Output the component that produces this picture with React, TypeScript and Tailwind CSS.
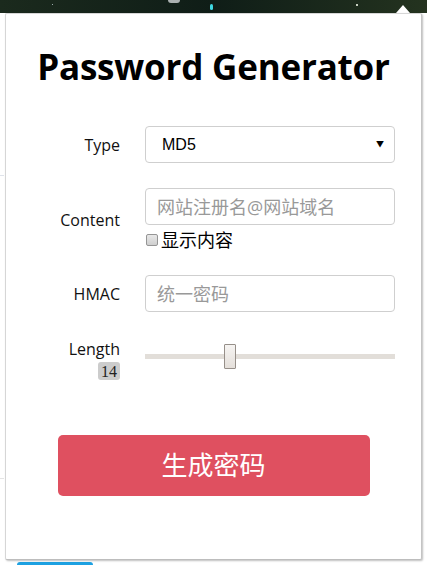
import React from "react";

// Extension popup "Password Generator" over its host page
const sans = "font-['Segoe_UI','Open_Sans','Noto_Sans_CJK_SC',sans-serif]";

export default function App() {
  const length = 14;
  const min = 4;
  const max = 34;
  const pct = (length - min) / (max - min);

  return (
    <div className={`relative w-[427px] h-[565px] overflow-hidden bg-white ${sans}`}>
      {/* host page: dark starry header strip */}
      <div className="h-[13px] bg-gradient-to-r from-[#1b2a1d] via-[#0f1d17] to-[#24331f] relative">
        <span className="absolute left-[168px] top-0 w-[12px] h-[3px] bg-[#aab0b0] rounded-b-sm" />
        <span className="absolute left-[210px] top-[4px] w-[3px] h-[6px] bg-[#3fd7e0] rounded-full" />
        <span className="absolute left-[356px] top-[4px] w-[2px] h-[2px] bg-[#c8d0c0]" />
        <span className="absolute left-[52px] top-[4px] w-[1px] h-[1px] bg-[#9aa]" />
      </div>
      {/* host page bottom bits */}
      <div className="absolute left-[17px] bottom-0 w-[76px] h-[3px] bg-[#1da1e2] rounded-t" />
      <div className="absolute left-0 top-[175px] w-[4px] h-px bg-[#dfe3ea]" />
      <div className="absolute left-0 top-[478px] w-[4px] h-px bg-[#e4e4e4]" />

      {/* popup arrow */}
      <div className="absolute left-[396px] top-[5px] w-0 h-0 border-l-[7px] border-r-[7px] border-b-[8px] border-l-transparent border-r-transparent border-b-white" />

      {/* popup */}
      <div className="absolute left-[5px] top-[13px] w-[417px] h-[547px] bg-white border border-[#d6d6d6] border-r-[#c4c4c4] border-b-[#bdbdbd] rounded-[2px] shadow-[1px_1px_2px_rgba(0,0,0,0.25)]">
        <h1 className="mt-[31px] h-[44px] text-center text-[35px] leading-[44px] font-bold text-black font-['Segoe_UI','Open_Sans',sans-serif] tracking-[-0.2px]">
          Password Generator
        </h1>

        <div className="mt-[37px] flex flex-col text-[16px] text-[#111]">
          {/* Type */}
          <div className="flex items-center">
            <div className="w-[114px] text-right">Type</div>
            <div className="ml-[25px] relative w-[250px] h-[37px]">
              <select className="appearance-none w-full h-full border border-[#cfcfcf] rounded-[4px] pl-[16px] text-[16px] bg-white text-black font-['Liberation_Sans',sans-serif] outline-none">
                <option>MD5</option>
              </select>
              <span className="absolute right-[11px] top-[14px] text-[8px] leading-none text-black pointer-events-none">▼</span>
            </div>
          </div>

          {/* Content */}
          <div className="flex items-center mt-[25px]">
            <div className="w-[114px] text-right">Content</div>
            <div className="ml-[25px] w-[250px] flex flex-col">
              <input
                placeholder="网站注册名@网站域名"
                className="w-full h-[37px] border border-[#cfcfcf] rounded-[4px] px-[11px] text-[18px] outline-none placeholder:text-[#999]"
              />
              <label className="mt-[4px] flex items-center h-[22px] text-[18px] text-black">
                <span className="ml-[1px] w-[12px] h-[12px] border border-[#959595] rounded-[2px] bg-gradient-to-b from-[#e8e8e8] to-[#cfcfcf]" />
                <span className="ml-[3px]">显示内容</span>
              </label>
            </div>
          </div>

          {/* HMAC */}
          <div className="flex items-center mt-[24px]">
            <div className="w-[114px] text-right">HMAC</div>
            <input
              placeholder="统一密码"
              className="ml-[25px] w-[250px] h-[37px] border border-[#cfcfcf] rounded-[4px] px-[11px] text-[18px] outline-none placeholder:text-[#999]"
            />
          </div>

          {/* Length */}
          <div className="flex items-start mt-[25px]">
            <div className="w-[114px] flex flex-col items-end">
              <span className="leading-[24px]">Length</span>
              <span className="mt-[1px] px-[3px] h-[18px] leading-[19px] bg-[#cccccc] rounded-[3px] text-[16px] text-[#222] font-['Liberation_Serif',serif]">
                {length}
              </span>
            </div>
            <div className="ml-[25px] w-[250px] relative h-[26px] mt-[7px]">
              <div className="absolute left-0 right-0 top-[10px] h-[5px] bg-[#e2ded9]" />
              <div
                className="absolute top-0 w-[12px] h-[25px] border border-[#968f89] rounded-[1px] bg-gradient-to-b from-[#f6f4f2] to-[#e4dfda]"
                style={{ left: `${Math.round(pct * 238)}px` }}
              />
            </div>
          </div>
        </div>

        <div className="mt-[55px] flex justify-center">
          <button className="w-[312px] h-[61px] rounded-[5px] bg-[#df5060] text-white text-[26px]">
            生成密码
          </button>
        </div>
      </div>
    </div>
  );
}
